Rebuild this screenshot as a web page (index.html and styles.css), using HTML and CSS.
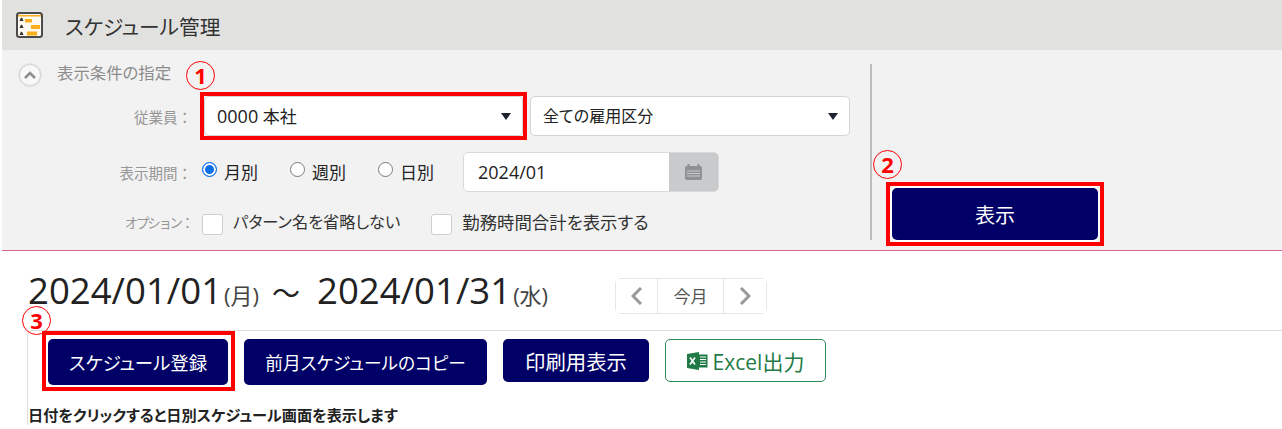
FILE: index.html
```html
<!DOCTYPE html>
<html lang="ja">
<head>
  <meta charset="UTF-8" />
  <title>スケジュール管理</title>
  <link rel="stylesheet" href="styles.css">
</head>
<body>

  <header class="title-bar">
    <svg class="title-icon" width="27" height="26" viewBox="0 0 27 26">
      <rect x="1" y="1" width="25" height="24" rx="2.500" fill="#fffaf0" stroke="#4a4a4a" stroke-width="2"/>
      <path d="M2 3h23v1.500H2z" fill="#f9ae1d"/>
      <path d="M3.500 9h4l-1-2.200a1 1 0 1 0-2 0zM3.500 16h4l-1-2.200a1 1 0 1 0-2 0zM3.500 23h4l-1-2.200a1 1 0 1 0-2 0z" fill="#333"/>
      <path d="M9 7h7v3.500H9zM15 13h9v4h-9zM11 19.500h10v4H11z" fill="#f9ae1d"/>
    </svg>
    <h1>スケジュール管理</h1>
  </header>

  <section class="conditions">
    <div class="conditions-form">
      <div class="conditions-title">
        <span class="toggle">
          <svg width="14" height="9" viewBox="0 0 14 9"><path d="M2 7l5-5 5 5" fill="none" stroke="#8d8d8d" stroke-width="2.600"/></svg>
        </span>
        <span class="conditions-name">表示条件の指定</span>
        <span class="step step-one">1</span>
      </div>

      <div class="row row-employee">
        <label class="row-label">従業員：</label>
        <div class="marked">
          <div class="select select-office"><span class="num">0000</span> 本社</div>
        </div>
        <div class="select select-type">全ての雇用区分</div>
      </div>

      <div class="row row-period">
        <label class="row-label">表示期間：</label>
        <label class="radio checked">月別</label>
        <label class="radio">週別</label>
        <label class="radio">日別</label>
        <div class="date-input">
          <span class="date-value">2024/01</span>
          <span class="date-button">
            <svg width="19" height="18" viewBox="0 0 19 18">
              <rect x="1" y="3" width="17" height="14" rx="2" fill="#8f9194"/>
              <path d="M4.500 1v4M14.500 1v4" stroke="#8f9194" stroke-width="2"/>
              <path d="M3 8h13M3 10.500h13M3 13h13" stroke="#c9cacc" stroke-width="1"/>
            </svg>
          </span>
        </div>
      </div>

      <div class="row row-options">
        <label class="row-label">オプション：</label>
        <label class="check check-first"><span class="box"></span>パターン名を省略しない</label>
        <label class="check check-second"><span class="box"></span>勤務時間合計を表示する</label>
      </div>
    </div>

    <div class="conditions-submit">
      <button class="btn btn-show">表示<span class="step step-two">2</span></button>
    </div>
  </section>

  <div class="range">
    <div class="range-text">
      <span class="num">2024/01/01</span><small>(月)</small>
      <span class="tilde">～</span>
      <span class="num">2024/01/31</span><small>(水)</small>
    </div>
    <div class="month-nav">
      <button class="nav-btn nav-arrow">
        <svg width="12" height="18" viewBox="0 0 12 18"><path d="M10 1L2 9l8 8" fill="none" stroke="#999" stroke-width="3"/></svg>
      </button>
      <button class="nav-btn nav-today">今月</button>
      <button class="nav-btn nav-arrow">
        <svg width="12" height="18" viewBox="0 0 12 18"><path d="M2 1l8 8-8 8" fill="none" stroke="#999" stroke-width="3"/></svg>
      </button>
    </div>
  </div>

  <section class="schedule">
    <div class="actions">
      <button class="btn btn-register">スケジュール登録<span class="step step-three">3</span></button>
      <button class="btn btn-copy">前月スケジュールのコピー</button>
      <button class="btn btn-print">印刷用表示</button>
      <button class="btn-excel">
        <svg width="21" height="18" viewBox="0 0 21 18">
          <path d="M0 2l12-2v18L0 16z" fill="#1f7a45"/>
          <path d="M12 2.500h8.500v13H12z" fill="#1f7a45"/>
          <path d="M13 5h6M13 7.500h6M13 10h6M13 12.500h6" stroke="#fff" stroke-width="1.200"/>
          <path d="M3 5.500l5 7M8 5.500l-5 7" stroke="#fff" stroke-width="1.700"/>
        </svg>
        <span>Excel出力</span>
      </button>
    </div>
    <p class="hint">日付をクリックすると日別スケジュール画面を表示します</p>
  </section>

</body>
</html>
```

FILE: styles.css
```css
body {
  font-family: "Open Sans", "Noto Sans CJK JP", sans-serif;
  font-feature-settings: "palt";
  margin: 0;
  padding: 0 0 0 2px;
  height: 429px;
  overflow: hidden;
  background: #ffffff;
  color: #222;
}

button {
  font-family: inherit;
  font-feature-settings: inherit;
  cursor: pointer;
}

.num {
  font-size: 1.06em;
}

.title-bar {
  display: flex;
  align-items: center;
  height: 50px;
  padding-left: 14px;
  background: #e1e1df;
}

.title-bar h1 {
  margin: 2px 0 0 22px;
  font-size: 20.700px;
  font-weight: 400;
  color: #333;
}

.conditions {
  display: flex;
  height: 200px;
  background: #f2f2f2;
  border-bottom: 1px solid #d9678f;
}

.conditions-form {
  width: 868px;
  height: 176px;
  margin-top: 14px;
  border-right: 2px solid #bdbdbd;
}

.conditions-title {
  position: relative;
  display: flex;
  align-items: center;
  height: 22px;
  padding-left: 17px;
  font-size: 16.400px;
  line-height: 18px;
  color: #8c8c8c;
}

.conditions-name {
  margin-top: -4px;
}

.toggle {
  display: flex;
  align-items: center;
  justify-content: center;
  width: 20px;
  height: 20px;
  margin-right: 16px;
  border: 1px solid #d5d5d5;
  border-radius: 50%;
  background: #f8f8f8;
  box-shadow: 0 0 0 1px #e4e4e4;
}

.row {
  display: flex;
  align-items: center;
}

.row-label {
  width: 190px;
  margin-right: 10px;
  text-align: right;
  font-size: 14.500px;
  font-feature-settings: normal;
  color: #969696;
  white-space: nowrap;
}

.row-employee {
  height: 40px;
  margin-top: 10px;
}

.row-employee .row-label {
  margin-right: 8px;
}

.row-options .row-label {
  font-size: 13.500px;
  letter-spacing: -2.300px;
}

.marked {
  border: 4px solid #ff0000;
  margin: -5px 0;
}

.select {
  position: relative;
  box-sizing: border-box;
  height: 40px;
  line-height: 38px;
  padding-left: 12px;
  background: #fff;
  border: 1px solid #d4d4d4;
  border-radius: 5px;
  font-size: 16px;
}

.select::after {
  content: "";
  position: absolute;
  right: 11px;
  top: 16px;
  border-left: 5px solid transparent;
  border-right: 5px solid transparent;
  border-top: 7px solid #1d2230;
}

.select-office {
  width: 319px;
  font-size: 17px;
}

.select-type {
  width: 320px;
  margin-left: 3px;
}

.row-period {
  height: 40px;
  margin-top: 16px;
}

.radio {
  display: flex;
  align-items: center;
  margin-right: 32px;
  margin-top: -2px;
  font-size: 17px;
}

.radio::before {
  content: "";
  box-sizing: border-box;
  width: 15px;
  height: 15px;
  margin-right: 7px;
  background: #fff;
  border: 1.500px solid #7a7a7a;
  border-radius: 50%;
  transform: translateY(-2px);
}

.radio.checked::before {
  border: 1.500px solid #0b6fe8;
  box-shadow: inset 0 0 0 2px #fff;
  background: #0b6fe8;
}

.date-input {
  display: flex;
  box-sizing: border-box;
  width: 256px;
  height: 40px;
  margin-left: -3px;
  background: #fff;
  border: 1px solid #d9d9d9;
  border-radius: 5px;
  overflow: hidden;
}

.date-value {
  flex: 1;
  line-height: 38px;
  padding-left: 14px;
  font-size: 18px;
}

.date-button {
  display: flex;
  align-items: center;
  justify-content: center;
  width: 49px;
  background: #c9cacc;
}

.row-options {
  height: 22px;
  margin-top: 19px;
}

.check {
  display: flex;
  align-items: center;
  line-height: 20px;
  color: #333;
}

.check-first {
  margin-right: 31px;
  font-size: 16.200px;
}

.check-second {
  font-size: 17.400px;
}

.box {
  box-sizing: border-box;
  width: 21px;
  height: 21px;
  margin-right: 10px;
  background: #fff;
  border: 1px solid #cfcfcf;
  border-radius: 3px;
  transform: translateY(2px);
}

.conditions-submit {
  display: flex;
  align-items: flex-start;
  padding: 138px 0 0 20px;
}

.btn {
  position: relative;
  height: 42px;
  background: #000066;
  color: #fff;
  border: none;
  border-radius: 5px;
  font-size: 20px;
  padding: 0;
}

.btn-show {
  width: 206px;
  height: 52px;
  box-shadow: 0 0 0 2px #fff;
}

.btn-show::after,
.btn-register::after {
  content: "";
  position: absolute;
  inset: -6px;
  border: 4px solid #ff0000;
}

.btn-register::after {
  inset: -8px -7px -6px -6px;
}

.step {
  position: absolute;
  box-sizing: border-box;
  width: 29px;
  height: 29px;
  border: 1px solid #ff0000;
  border-radius: 50%;
  color: #ff0000;
  font-family: "Open Sans", sans-serif;
  font-size: 22px;
  font-weight: 700;
  line-height: 26px;
  text-align: center;
}

.step-one {
  left: 184px;
  top: -3px;
}

.step-two {
  left: -19px;
  top: -38px;
}

.step-three {
  left: -26px;
  top: -33px;
}

.range {
  display: flex;
  align-items: center;
  height: 79px;
  padding-left: 26px;
}

.range-text {
  display: flex;
  align-items: baseline;
  width: 587px;
  font-size: 34.500px;
  line-height: 1;
  color: #222;
}

.range-text small {
  margin-left: 2px;
  font-size: 22px;
  color: #444;
}

.tilde {
  margin: 0 17px 0 13px;
  font-size: 28px;
}

.month-nav {
  display: flex;
  box-sizing: border-box;
  height: 36px;
  border: 1px solid #e6e6e6;
  border-radius: 6px;
  margin-top: 10px;
}

.nav-btn {
  display: flex;
  align-items: center;
  justify-content: center;
  padding: 0;
  background: #fff;
  border: none;
  border-right: 1px solid #e6e6e6;
  color: #555;
  font-size: 17px;
}

.nav-btn:last-child {
  border-right: none;
}

.nav-arrow {
  width: 42px;
}

.nav-today {
  width: 66px;
}

.schedule {
  margin-left: 25px;
  padding: 8px 0 0 20px;
  border-top: 1px solid #dddddd;
  border-left: 1px solid #dddddd;
  border-top-left-radius: 6px;
}

.actions {
  display: flex;
  align-items: flex-start;
  gap: 16px;
}

.btn-register {
  width: 180px;
  height: 46px;
  font-size: 18.400px;
}

.btn-copy {
  width: 243px;
  height: 46px;
  font-size: 17.700px;
}

.btn-print {
  width: 146px;
  height: 43px;
  font-size: 20.400px;
}

.btn-excel {
  display: flex;
  align-items: center;
  justify-content: center;
  gap: 5px;
  width: 161px;
  height: 43px;
  padding: 0;
  background: #fff;
  border: 1px solid #2e8b57;
  border-radius: 5px;
  color: #1f7a45;
  font-size: 21px;
}

.hint {
  margin: 18px 0 0 -20px;
  font-size: 15.200px;
  font-weight: 700;
  color: #222;
}
```
